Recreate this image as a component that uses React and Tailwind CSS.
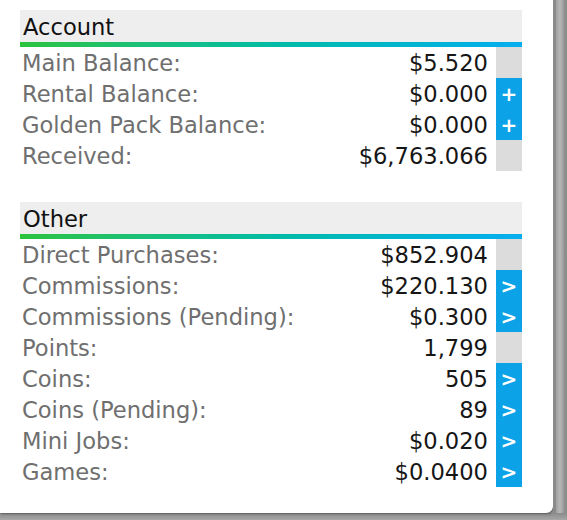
import React from "react";

const account = [
  { label: "Main Balance:", value: "$5.520", side: "gray" },
  { label: "Rental Balance:", value: "$0.000", side: "plus" },
  { label: "Golden Pack Balance:", value: "$0.000", side: "plus" },
  { label: "Received:", value: "$6,763.066", side: "gray" },
];

const other = [
  { label: "Direct Purchases:", value: "$852.904", side: "gray" },
  { label: "Commissions:", value: "$220.130", side: "arrow" },
  { label: "Commissions (Pending):", value: "$0.300", side: "arrow" },
  { label: "Points:", value: "1,799", side: "gray" },
  { label: "Coins:", value: "505", side: "arrow" },
  { label: "Coins (Pending):", value: "89", side: "arrow" },
  { label: "Mini Jobs:", value: "$0.020", side: "arrow" },
  { label: "Games:", value: "$0.0400", side: "arrow" },
];

function Row({ label, value, side }) {
  return (
    <div className="flex h-[31px] items-center">
      <div className="flex-1 pl-[2px] pt-[2px] text-[#6f6f6f] leading-[29px] whitespace-nowrap">{label}</div>
      <div className="pr-[8px] pt-[2px] text-[#161616] leading-[29px] whitespace-nowrap">{value}</div>
      {side === "gray" ? (
        <div className="w-[26px] self-stretch bg-[#dcdcdc]" />
      ) : (
        <div className="w-[26px] self-stretch bg-[#0ba2e8] flex items-center justify-center text-white font-bold text-[20px] leading-none">
          {side === "plus" ? "+" : ">"}
        </div>
      )}
    </div>
  );
}

function Section({ title, rows }) {
  return (
    <div className="w-[502px]">
      <div className="h-[32px] bg-[#eeeeee] flex items-center pl-[3px] pt-[3px] text-[#111111]">{title}</div>
      <div className="h-[5px] bg-gradient-to-r from-[#2cc33c] to-[#09adf0]" />
      <div>
        {rows.map((r, i) => (
          <Row key={i} {...r} />
        ))}
      </div>
    </div>
  );
}

export default function App() {
  return (
    <div
      className="w-[567px] h-[520px] bg-[#9a9a9a] overflow-hidden"
      style={{ fontFamily: '"DejaVu Sans", Verdana, sans-serif' }}
    >
      <div className="flex h-[513px]">
        <div className="w-[553px] h-[513px] bg-white rounded-br-[7px] pt-[10px] pl-[20px] text-[22.6px] shadow-[1px_1px_2px_rgba(0,0,0,0.35)]">
          <Section title="Account" rows={account} />
          <div className="h-[31px]" />
          <Section title="Other" rows={other} />
        </div>
        <div className="flex-1 flex">
          <div className="w-[3px] bg-[#8a8a8a]" />
          <div className="w-[8px] bg-gradient-to-r from-[#a0a0a0] via-[#b8b8b8] to-[#9a9a9a]" />
          <div className="flex-1 bg-[#8e8e8e]" />
        </div>
      </div>
      <div className="h-[7px] bg-gradient-to-b from-[#8a8a8a] to-[#a8a8a8]" />
    </div>
  );
}
